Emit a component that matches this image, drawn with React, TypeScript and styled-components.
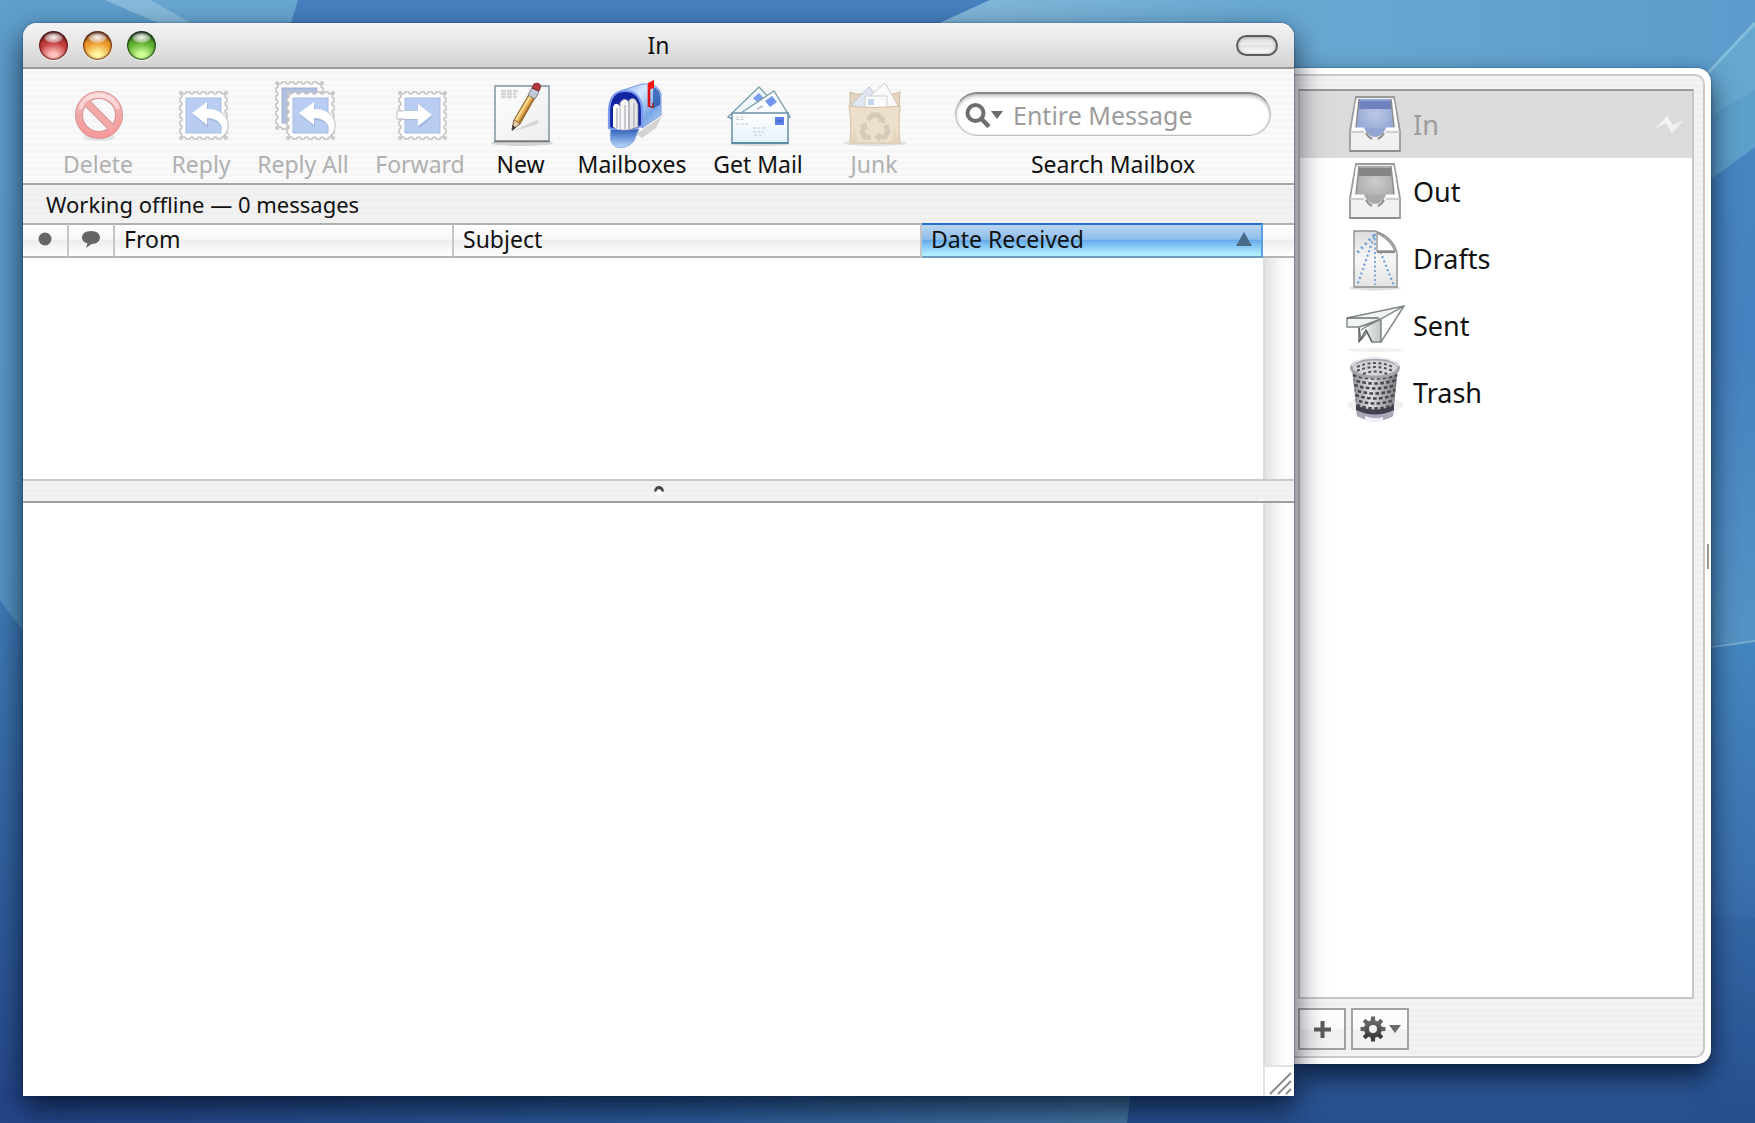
import React from "react";
import styled, { createGlobalStyle, css } from "styled-components";

const fontStack = '"Noto Sans", "Open Sans", "Liberation Sans", sans-serif';
const stripes = (a: string, b: string) =>
  `repeating-linear-gradient(to bottom, ${a} 0px, ${a} 2px, ${b} 4px, ${a} 6px)`;

const GlobalStyle = createGlobalStyle`
  *, *::before, *::after { box-sizing: border-box; }
  body { margin: 0; font-family: ${fontStack}; color: #111; background: #3f7dba; }
  button, input { font: inherit; color: inherit; margin: 0; }
  button { padding: 0; border: 0; background: none; }
  svg { display: block; }
`;

/* ---------- Desktop ---------- */

const Desktop = styled.main`
  position: relative;
  isolation: isolate;
  display: grid;
  grid-template-columns: minmax(0, 1fr) 417px;
  min-height: 100vh;
  padding: 23px 44px 27px 23px;
  overflow: hidden;
`;

const Wallpaper = styled.svg`
  position: absolute;
  inset: 0;
  z-index: -1;
  width: 100%;
  height: 100%;
`;

/* ---------- Main window ---------- */

const Window = styled.section`
  position: relative;
  z-index: 1;
  display: flex;
  flex-direction: column;
  min-width: 0;
  background: #fff;
  border-radius: 14px 14px 0 0;
  box-shadow: 0 0 2px rgba(0, 20, 50, 0.55), 0 12px 30px rgba(0, 10, 25, 0.75);
`;

const TitleBar = styled.header`
  display: grid;
  grid-template-columns: 1fr auto 1fr;
  align-items: center;
  height: 46px;
  padding: 0 16px;
  border-bottom: 2px solid #9b9b9b;
  border-radius: 14px 14px 0 0;
  background: linear-gradient(#f4f4f4, #e6e6e6 45%, #d2d2d2);
`;

const Title = styled.h1`
  margin: 0;
  font-size: 23px;
  font-weight: 400;
  line-height: 30px;
`;

const Lights = styled.div`
  display: flex;
  gap: 15px;
`;

const Light = styled.button<{ $rim: string; $mid: string; $glow: string }>`
  width: 29px;
  height: 29px;
  border-radius: 50%;
  background: radial-gradient(ellipse 10px 6px at 50% 22%, rgba(255, 255, 255, 0.95), rgba(255, 255, 255, 0.45) 80%, transparent),
    radial-gradient(ellipse 16px 13px at 50% 84%, ${(p) => p.$glow} 20%, transparent),
    linear-gradient(${(p) => p.$rim} 5%, ${(p) => p.$mid} 42%, ${(p) => p.$mid});
  box-shadow: inset 0 0 2px 1px ${(p) => p.$rim}, inset 0 2px 2px rgba(20, 20, 20, 0.6),
    0 1px 1px rgba(255, 255, 255, 0.7);
`;

const PillButton = styled.button`
  justify-self: end;
  width: 42px;
  height: 21px;
  border: 2px solid #5d5d5d;
  border-radius: 11px;
  background: linear-gradient(#d8d8d8, #f0f0f0 45%, #e2e2e2 50%, #fff);
  box-shadow: inset 0 0 3px rgba(0, 0, 0, 0.35);
`;

const Toolbar = styled.div`
  display: flex;
  height: 116px;
  padding: 9px 23px 0;
  border-bottom: 2px solid #a6a6a6;
  background: ${stripes("#fafafa", "#f4f4f4")};
`;

const ToolButton = styled.button<{ $width: number }>`
  display: flex;
  flex: none;
  flex-direction: column;
  align-items: center;
  width: ${(p) => p.$width}px;
  font-size: 23px;
  line-height: 28px;
  white-space: nowrap;
  &:disabled { color: #b0b0b0; }
`;

const ToolIcon = styled.svg`
  width: 72px;
  height: 72px;
  overflow: visible;
`;

const SearchGroup = styled.div`
  display: flex;
  flex-direction: column;
  align-items: center;
  width: 316px;
  margin-left: auto;
  font-size: 23px;
  line-height: 28px;
`;

const SearchField = styled.div`
  display: flex;
  align-items: center;
  width: 100%;
  height: 44px;
  margin: 14px 0;
  padding: 0 20px 0 9px;
  border: 1px solid #bdbdbd;
  border-top: 2px solid #8a8a8a;
  border-radius: 22px;
  background: #fff;
  box-shadow: inset 0 3px 3px rgba(0, 0, 0, 0.18), inset 0 0 2px rgba(0, 0, 0, 0.25);
`;

const SearchInput = styled.input`
  flex: 1;
  min-width: 0;
  height: 34px;
  margin-left: 10px;
  padding: 0;
  border: 0;
  outline: 0;
  background: transparent;
  font-size: 25px;
  &::placeholder { color: #9c9c9c; opacity: 1; }
`;

const StatusBar = styled.p`
  height: 38px;
  margin: 0;
  padding: 0 23px;
  font-size: 22px;
  line-height: 38px;
  background: ${stripes("#f2f2f2", "#ededed")};
`;

const MessageList = styled.div`
  display: flex;
  flex-direction: column;
  height: 256px;
`;

const MessageTable = styled.table`
  flex: none;
  width: 100%;
  table-layout: fixed;
  border-collapse: separate;
  border-spacing: 0;
`;

const HeaderCell = styled.th<{ $sorted?: boolean; $last?: boolean }>`
  height: 35px;
  padding: 0;
  border-top: 2px solid #b0b0b0;
  border-right: ${(p) => (p.$last ? "0" : "2px solid #c6c6c6")};
  border-bottom: 2px solid #b4b4b4;
  background: linear-gradient(#fff, #f6f6f6 48%, #ededed 50%, #fff);
  font-weight: 400;
  text-align: left;
  ${(p) =>
    p.$sorted &&
    css`
      border-top-color: #2270cf;
      border-right-color: #5b9fe0;
      border-bottom-color: #6c9cc0;
      background: linear-gradient(#b9d5f1, #8fbeeb 46%, #68aaea 50%, #a6e6ff 88%, #b4f0ff);
    `}
`;

const HeaderButton = styled.button<{ $center?: boolean }>`
  display: flex;
  align-items: center;
  justify-content: ${(p) => (p.$center ? "center" : "space-between")};
  width: 100%;
  height: 31px;
  padding: 0 9px 3px;
  font-size: 23px;
  line-height: 28px;
  white-space: nowrap;
`;

const PaneRow = styled.div`
  display: flex;
  flex: 1;
  min-height: 0;
`;

const Blank = styled.div`
  flex: 1;
`;

const ScrollColumn = styled.div`
  display: flex;
  flex-direction: column;
  width: 31px;
`;

const ScrollTrack = styled.div`
  flex: 1;
  border-left: 2px solid #dcdcdc;
  background: linear-gradient(to right, #e2e2e2, #f6f6f6 45%, #fff 75%, #f6f6f6);
`;

const Splitter = styled.div`
  display: flex;
  justify-content: center;
  height: 24px;
  padding-top: 4px;
  border-top: 2px solid #cacaca;
  border-bottom: 2px solid #9f9f9f;
  background: ${stripes("#f2f2f2", "#ededed")};
`;

const ResizeCorner = styled.div`
  height: 31px;
  border-top: 2px solid #e2e2e2;
  border-left: 2px solid #e2e2e2;
`;

/* ---------- Mailbox drawer ---------- */

const Drawer = styled.aside`
  position: relative;
  display: flex;
  margin: 45px 0 32px;
  padding: 6px 6px 6px 0;
  border-radius: 0 14px 14px 0;
  background: #fff;
  box-shadow: 0 0 2px rgba(0, 20, 50, 0.6), 0 12px 26px rgba(0, 10, 30, 0.75);
`;

const DrawerPanel = styled.div`
  display: flex;
  flex: 1;
  flex-direction: column;
  min-width: 0;
  padding: 13px 9px 6px 4px;
  border: 2px solid #c9c9c9;
  border-left: 0;
  border-radius: 0 10px 10px 0;
  background: ${stripes("#f3f3f3", "#ededed")};
`;

const MailboxList = styled.ul`
  flex: 1;
  margin: 0;
  padding: 0;
  border: 2px solid #c6c6c6;
  border-top-color: #999;
  background: #fff;
  list-style: none;
`;

const MailboxButton = styled.button<{ $selected?: boolean }>`
  display: flex;
  align-items: center;
  gap: 8px;
  width: 100%;
  height: 67px;
  padding: 0 8px 0 45px;
  background: ${(p) => (p.$selected ? "#dbdbdb" : "transparent")};
  color: ${(p) => (p.$selected ? "#9d9d9d" : "#111")};
  font-size: 27px;
  text-align: left;
`;

const MailboxIcon = styled.svg`
  flex: none;
  width: 60px;
  height: 67px;
  overflow: visible;
`;

const MailboxName = styled.span`
  flex: 1;
`;

const DrawerActions = styled.div`
  display: flex;
  gap: 5px;
  margin-top: 9px;
`;

const SquareButton = styled.button<{ $wide?: boolean }>`
  display: flex;
  align-items: center;
  justify-content: center;
  gap: 3px;
  width: ${(p) => (p.$wide ? 58 : 48)}px;
  height: 42px;
  border: 2px solid #a2a2a2;
  background: linear-gradient(#fff, #fafafa 50%, #efefef 52%, #f3f3f3);
`;

const DrawerGrip = styled.div`
  position: absolute;
  top: calc(50% - 22px);
  right: 2px;
  width: 2px;
  height: 25px;
  background: #9a9a9a;
`;

/* ---------- Drawings ---------- */

/* Outline of a postage stamp whose edges are cut by n round notches per side. */
function stampPath(x: number, y: number, size: number, n = 6) {
  const step = size / n;
  const flat = step * 0.5;
  const cut = step - flat;
  const r = cut / 2;
  let d = `M${x} ${y}`;
  const sides = [[1, 0], [0, 1], [-1, 0], [0, -1]];
  for (const [dx, dy] of sides) {
    for (let i = 0; i < n; i++) {
      d += `l${(dx * flat) / 2} ${(dy * flat) / 2}`;
      d += `a${r} ${r} 0 0 0 ${dx * cut} ${dy * cut}`;
      d += `l${(dx * flat) / 2} ${(dy * flat) / 2}`;
    }
  }
  return d + "z";
}

const Stamp = ({ x, y, dim }: { x: number; y: number; dim?: boolean }) => (
  <g>
    <path d={stampPath(x, y, 47)} fill="#fdfdfd" stroke="#c2c2c2" strokeWidth="1.5" strokeLinejoin="round" />
    <rect x={x + 6} y={y + 6} width="35" height="35" fill={dim ? "#b0bfdf" : "#b9cdf2"} stroke={dim ? "#a3b0cf" : "#a9bce4"} strokeWidth="1" />
  </g>
);

const ReplyArrow = ({ x, y }: { x: number; y: number }) => (
  <g transform={`translate(${x} ${y})`}>
    <path d="M13 23L28 12V19C42 18 51 26 48 37Q47 43 43 45C45 34 38 29 28 28V36Z" fill="#8c9cc0" opacity=".4" />
    <path d="M12 21L27 10V17C39 17 48 23 48 33Q48 41 43 44C44 33 38 26 27 26V33Z" fill="#fff" />
    <path d="M41 20C48 25 49 31 48 36Q47 41 43 44" fill="none" stroke="#cfcfcf" strokeWidth="1.2" />
  </g>
);

const icons: Record<string, React.ReactNode> = {
  delete: (
    <>
      <defs>
        <linearGradient id="no" x1="0" y1="0" x2="0" y2="1">
          <stop offset="0" stopColor="#f7c9c8" />
          <stop offset=".5" stopColor="#f0a5a5" />
          <stop offset="1" stopColor="#f69a9c" />
        </linearGradient>
      </defs>
      <ellipse cx="37" cy="59" rx="16" ry="4" fill="#000" opacity=".08" />
      <circle cx="37" cy="37" r="20" fill="none" stroke="#db9393" strokeWidth="8" />
      <path d="M23 23L51 51" stroke="#db9393" strokeWidth="8" />
      <circle cx="37" cy="37" r="20" fill="none" stroke="url(#no)" strokeWidth="6" />
      <path d="M23 23L51 51" stroke="#f2a9a9" strokeWidth="6" />
      <path d="M18 31A20 20 0 0 1 56 31" fill="none" stroke="#fff" strokeWidth="4" opacity=".4" />
    </>
  ),
  reply: (
    <>
      <Stamp x={15} y={14} />
      <ReplyArrow x={15} y={14} />
    </>
  ),
  replyAll: (
    <>
      <Stamp x={9} y={4} dim />
      <Stamp x={20} y={14} />
      <ReplyArrow x={20} y={14} />
    </>
  ),
  forward: (
    <>
      <Stamp x={15} y={14} />
      <path d="M14 34H34V28L49 39L34 51V42H14Z" fill="#8c9cc0" opacity=".4" />
      <path d="M13 33H34V26L48 37L34 48V41H13Z" fill="#fff" />
      <path d="M20 33H13V41H20" fill="none" stroke="#c4c4c4" strokeWidth="1.2" />
    </>
  ),
  compose: (
    <>
      <defs>
        <linearGradient id="paper" x1="0" y1="0" x2="1" y2="1">
          <stop offset="0" stopColor="#fff" />
          <stop offset="1" stopColor="#ececec" />
        </linearGradient>
      </defs>
      <ellipse cx="37" cy="65" rx="31" ry="3" fill="#000" opacity=".14" />
      <rect x="10" y="8" width="54" height="55" fill="url(#paper)" stroke="#8699a4" strokeWidth="1.6" />
      <path d="M9.200 63.500H64.800" stroke="#777" strokeWidth="1.6" />
      <path d="M16 13H33M16 16H31M16 19H32" stroke="#d6d6d6" strokeWidth="2.600" strokeDasharray="5 1" />
      <path d="M28 53L52 42Q56 43 50 47Z" fill="#000" opacity=".13" />
      <path d="M27 52L29 42L46 13L52 16L35 46Z" fill="#e2aa52" stroke="#7e5a2b" strokeWidth="1" />
      <path d="M31 42L48 14" stroke="#f8dc98" strokeWidth="2" />
      <path d="M34 45L51 17" stroke="#a97332" strokeWidth="1.600" />
      <path d="M27 52L29 42L35 46Z" fill="#e6cfae" stroke="#7a5a3a" strokeWidth=".7" />
      <path d="M27 53L27.500 47L31 49.500Z" fill="#3c3c3c" />
      <path d="M43 17L47 10L54 14L50 21Z" fill="#c5cad8" stroke="#6e7385" strokeWidth=".9" />
      <path d="M47 10L49 6Q52 4 55 6.500L55.500 9.500L54 13Z" fill="#b5393a" stroke="#7a2626" strokeWidth=".9" />
    </>
  ),
  mailboxes: (
    <>
      <defs>
        <linearGradient id="mb" x1="0" y1="0" x2="1" y2="1">
          <stop offset="0" stopColor="#7fa6f0" />
          <stop offset=".35" stopColor="#d6e8ff" />
          <stop offset=".7" stopColor="#78a6e6" />
          <stop offset="1" stopColor="#c6daf8" />
        </linearGradient>
        <linearGradient id="door" x1="0" y1="0" x2="0" y2="1">
          <stop offset="0" stopColor="#2757b5" />
          <stop offset="1" stopColor="#b9ddfb" />
        </linearGradient>
      </defs>
      <path d="M40 56L66 38L60 50L46 60Z" fill="#000" opacity=".15" />
      <path d="M24 13L46 6Q62 4 65 16V37L46 50Z" fill="url(#mb)" stroke="#7b9cdf" strokeWidth="1" />
      <path d="M58 9Q64 12 64 19V27Q60 28 57 31V12Z" fill="#1d4fa8" opacity=".7" />
      <path d="M15 50Q12 65 20 69Q30 72 38 63L43 51Z" fill="url(#door)" stroke="#8fb1e6" strokeWidth="1" />
      <path d="M13 50V32Q14 13 29 13Q45 13 46 32V48L36 51H17Z" fill="#10259f" stroke="#7d9af0" strokeWidth="2.200" />
      <path d="M17 49V29Q19 23 24 28V52Z" fill="#fff" />
      <path d="M24 52V25Q28 18 33 24V52Z" fill="#f6f6f6" stroke="#9a9aaa" strokeWidth=".8" />
      <path d="M33 52V22Q39 17 42 27V49Z" fill="#e6e6e9" stroke="#83838f" strokeWidth=".8" />
      <path d="M21 30V50M29 27V51M38 25V50" stroke="#bcbcc2" strokeWidth="1.600" />
      <path d="M53 6V29" stroke="#d80f14" strokeWidth="2.600" />
      <path d="M52 5L58 2V10L52 12Z" fill="#f51414" />
      <path d="M54 29H57V25" fill="none" stroke="#a91515" strokeWidth="1.500" />
    </>
  ),
  getMail: (
    <>
      <defs>
        <linearGradient id="env" x1="0" y1="0" x2="0" y2="1">
          <stop offset="0" stopColor="#fff" />
          <stop offset="1" stopColor="#e3f2fb" />
        </linearGradient>
      </defs>
      <ellipse cx="38" cy="66" rx="30" ry="2" fill="#000" opacity=".12" />
      <path d="M6 39L37 9L50 23L22 47Z" fill="#f1f8fb" stroke="#7fa0af" strokeWidth="1.4" />
      <path d="M31 20L37 15L42 20L36 25Z" fill="#7d9df0" />
      <path d="M16 37L52 13L68 39L45 50Z" fill="#fafdff" stroke="#7fa0af" strokeWidth="1.4" />
      <path d="M43 23L50 18L55 24L48 29Z" fill="#7495ee" />
      <path d="M35 31L41 28" stroke="#bbb" strokeWidth="1.500" />
      <rect x="10" y="35" width="56" height="30" fill="url(#env)" stroke="#6f97ac" strokeWidth="1.6" />
      <path d="M9.500 65H66.500" stroke="#4d82a0" strokeWidth="1.6" />
      <rect x="53" y="39" width="9" height="8" fill="#5c80ea" />
      <path d="M55 43H60" stroke="#3557c4" strokeWidth="1" />
      <path d="M14 39H24M14 41.500H22M14 46H26M31 50H43M31 54H42M32 57H41" stroke="#c4c4c4" strokeWidth="1.200" strokeDasharray="3 1.500" />
    </>
  ),
  junk: (
    <>
      <ellipse cx="37" cy="65" rx="32" ry="3" fill="#000" opacity=".09" />
      <path d="M12 14L18 16H56L62 14L61 30H12Z" fill="#e3d5c1" stroke="#cfbda4" strokeWidth="1" />
      <path d="M14 26L31 9L43 22L38 30H16Z" fill="#dfe5f1" stroke="#bcc6d8" strokeWidth="1" />
      <path d="M33 17L47 5L60 28L50 32Z" fill="#fafafa" stroke="#ccc" strokeWidth="1" />
      <path d="M27 18H49V30H27Z" fill="#fbfbfb" stroke="#cfcfcf" strokeWidth="1" />
      <rect x="30" y="21" width="6" height="6" fill="#c5d6f1" />
      <path d="M11 28Q37 31 62 28Q60 46 62 65H12Q14 46 11 28Z" fill="#ecdfcb" stroke="#d8c4a8" strokeWidth="1.2" />
      <path d="M12 65L17 50L20 65M62 65L56 50L54 65" fill="#e2d0b6" opacity=".6" />
      <g fill="none" stroke="#d6cbba" strokeWidth="5">
        <path d="M30 42L34 37H40L44 42" />
        <path d="M48 47L50 54L47 59H40" />
        <path d="M33 59H27L24 54L26 48" />
      </g>
      <path d="M47 38V46L40 43ZM42 54V64L36 59ZM21 48L28 44L30 52Z" fill="#d6cbba" />
    </>
  ),
};

const Tray = ({ id, dark, mid, light }: { id: string; dark: string; mid: string; light: string }) => (
  <>
    <defs>
      <radialGradient id={id} cx=".5" cy=".45" r=".6">
        <stop offset="0" stopColor={light} />
        <stop offset="1" stopColor={mid} />
      </radialGradient>
    </defs>
    <path d="M11 6H49L55 40V60H5V40Z" fill="#f1f1f1" stroke="#9a9a9a" strokeWidth="1.800" />
    <path d="M14 8H46L49 37H41L38 42H22L19 37H11Z" fill={`url(#${id})`} />
    <path d="M14 8H46V18H14Z" fill={dark} />
    <path d="M14 8H46V10H14Z" fill={mid} />
    <path d="M12 9L8 37M48 9L52 37" stroke="#fff" strokeWidth="2" />
    <path d="M14 8L11 37M46 8L49 37" stroke="#8c8c8c" strokeWidth="1.400" />
    <path d="M7 38H19M41 38H53" stroke="#fff" strokeWidth="3" />
    <path d="M5 41H19M55 41H41" stroke="#c4c4c4" strokeWidth="1.400" />
    <path d="M20 37Q23 46 30 46Q37 46 40 37Z" fill={mid} />
    <path d="M21 42Q23 46 27 48M39 42Q37 46 33 48" stroke="#8c8c8c" strokeWidth="2" fill="none" />
    <path d="M4.500 60H55.500" stroke="#8f8f8f" strokeWidth="1.800" />
  </>
);

const meshRows = [18, 23, 28, 33, 38, 43, 48];

const mailboxIcons: Record<string, React.ReactNode> = {
  In: <Tray id="trayIn" dark="#6f82bd" mid="#93a5d3" light="#bac7e6" />,
  Out: <Tray id="trayOut" dark="#858585" mid="#a9a9a9" light="#cdcdcd" />,
  Drafts: (
    <>
      <defs>
        <linearGradient id="draft" x1="0" y1="0" x2="0" y2="1">
          <stop offset="0" stopColor="#dcdcdc" />
          <stop offset=".5" stopColor="#f6f6f6" />
          <stop offset="1" stopColor="#e4e4e4" />
        </linearGradient>
      </defs>
      <ellipse cx="30" cy="63" rx="26" ry="2.500" fill="#000" opacity=".12" />
      <path d="M9 6H30Q48 12 52 28V62H9Z" fill="url(#draft)" stroke="#8f8f8f" strokeWidth="1.400" />
      <path d="M30 9V60" stroke="#6f9fd6" strokeWidth="1.800" strokeDasharray="2 2.500" />
      <path d="M29 12L12 61M32 18L49 61" stroke="#6f9fd6" strokeWidth="2.200" strokeDasharray="2 2.700" />
      <path d="M29 10L10 30" stroke="#6f9fd6" strokeWidth="3" strokeDasharray="2 3.500" />
      <path d="M32 8Q45 14 50 26H32Z" fill="#fff" stroke="#9b9b9b" strokeWidth="1.400" />
      <path d="M32 27H50" stroke="#8a8a8a" strokeWidth="2" />
    </>
  ),
  Sent: (
    <>
      <defs>
        <linearGradient id="wing" x1="0" y1="0" x2="1" y2="0">
          <stop offset="0" stopColor="#fff" />
          <stop offset="1" stopColor="#bfc5c5" />
        </linearGradient>
      </defs>
      <ellipse cx="30" cy="58" rx="29" ry="2" fill="#000" opacity=".06" />
      <g strokeLinejoin="round" stroke="#7f8787" strokeWidth="1.400">
        <path d="M36 27V50H27L22 40L16 48L14 35Z" fill="url(#wing)" />
        <path d="M2 26L59 14L36 27L14 35H2Z" fill="#f2f4f4" />
        <path d="M59 14L36 27V50Z" fill="#fff" />
        <path d="M2 26H34" fill="none" stroke="#5f6767" />
        <path d="M14 36V50L21 38L27 50" fill="none" stroke="#555c5c" />
        <path d="M16 38L22 34L36 27" fill="none" />
      </g>
    </>
  ),
  Trash: (
    <>
      <defs>
        <linearGradient id="can" x1="0" y1="0" x2="1" y2="0">
          <stop offset="0" stopColor="#8e8e93" />
          <stop offset=".4" stopColor="#e0e0e3" />
          <stop offset="1" stopColor="#77777c" />
        </linearGradient>
      </defs>
      <ellipse cx="30" cy="46" rx="28" ry="8" fill="#000" opacity=".06" />
      <path d="M7 9L12 57Q30 67 48 57L53 9Z" fill="url(#can)" />
      {meshRows.map((y, i) => (
        <path
          key={y}
          d={`M${8 + i * 0.6} ${y - 2}Q30 ${y + 5} ${52 - i * 0.6} ${y - 2}`}
          fill="none"
          stroke="#47474c"
          strokeWidth="2.600"
          strokeDasharray="3.600 2.400"
          strokeDashoffset={i % 2 ? 3 : 0}
        />
      ))}
      <path d="M11 47Q30 56 49 47L48 57Q30 67 12 57Z" fill="#a9a9ba" />
      <path d="M11 46Q30 55 49 46L49 51Q30 60 11 51Z" fill="#40404f" />
      <path d="M20 57Q30 61 38 58V62Q30 64 20 62Z" fill="#f0f0f8" />
      <ellipse cx="30" cy="9" rx="23.500" ry="9" fill="#d6d6db" stroke="#a3a3ae" strokeWidth="3" />
      <path d="M12 8Q30 0 48 8M12 12Q30 4 48 12M18 15Q30 10 42 15" fill="none" stroke="#55555a" strokeWidth="2.200" strokeDasharray="3 2.500" />
      <path d="M7 7Q12 -1 30 -1Q48 -1 53 7" fill="none" stroke="#ededf2" strokeWidth="1.500" />
    </>
  ),
};

const CaretDown = () => (
  <svg width="12" height="8" viewBox="0 0 12 8" aria-hidden="true">
    <path d="M0 0H12L6 8Z" fill="#6b6b6b" />
  </svg>
);

const SearchGlyph = () => (
  <svg width="26" height="26" viewBox="0 0 26 26" aria-hidden="true">
    <circle cx="10.500" cy="11" r="8" fill="none" stroke="#6e6e6e" strokeWidth="4" />
    <path d="M16.500 17L24 24.500" stroke="#6e6e6e" strokeWidth="4.500" />
  </svg>
);

const Gear = () => (
  <svg width="26" height="26" viewBox="-13 -13 26 26" aria-hidden="true">
    <defs>
      <linearGradient id="gear" x1="0" y1="-13" x2="0" y2="13" gradientUnits="userSpaceOnUse">
        <stop offset="0" stopColor="#777" />
        <stop offset="1" stopColor="#303030" />
      </linearGradient>
    </defs>
    <circle r="6.500" fill="none" stroke="url(#gear)" strokeWidth="5" />
    {[0, 45, 90, 135, 180, 225, 270, 315].map((a) => (
      <path key={a} d="M-2.200 -8L-2 -12.500H2L2.200 -8Z" fill={a > 90 && a < 270 ? "#3a3a3a" : "#626262"} transform={`rotate(${a})`} />
    ))}
  </svg>
);

/* ---------- Data ---------- */

const lights = [
  { label: "Close", rim: "#5a1616", mid: "#c23a3a", glow: "#ffc2bd" },
  { label: "Minimize", rim: "#6a2a14", mid: "#eb9a2b", glow: "#fff6a0" },
  { label: "Zoom", rim: "#17361a", mid: "#5fae2c", glow: "#cdff96" },
];

const tools = [
  { icon: "delete", label: "Delete", width: 104, disabled: true },
  { icon: "reply", label: "Reply", width: 102, disabled: true },
  { icon: "replyAll", label: "Reply All", width: 102, disabled: true },
  { icon: "forward", label: "Forward", width: 132, disabled: true },
  { icon: "compose", label: "New", width: 69 },
  { icon: "mailboxes", label: "Mailboxes", width: 154 },
  { icon: "getMail", label: "Get Mail", width: 98 },
  { icon: "junk", label: "Junk", width: 134, disabled: true },
];

const mailboxes = ["In", "Out", "Drafts", "Sent", "Trash"];

export default function App() {
  return (
    <>
      <GlobalStyle />
      <Desktop>
        <Wallpaper viewBox="0 0 1755 1123" preserveAspectRatio="none" aria-hidden="true">
          <defs>
            <linearGradient id="sky" x1="0" y1="0" x2="0" y2="1">
              <stop offset="0" stopColor="#5f9fcd" />
              <stop offset=".5" stopColor="#5796c6" />
              <stop offset="1" stopColor="#4586bd" />
            </linearGradient>
            <linearGradient id="deep" x1="0" y1="540" x2="0" y2="1123" gradientUnits="userSpaceOnUse">
              <stop offset="0" stopColor="#4283bd" />
              <stop offset=".5" stopColor="#3365a2" />
              <stop offset="1" stopColor="#25468a" />
            </linearGradient>
            <linearGradient id="rightSea" x1="0" y1="147" x2="0" y2="645" gradientUnits="userSpaceOnUse">
              <stop offset="0" stopColor="#4785c2" />
              <stop offset=".4" stopColor="#4581c0" />
              <stop offset="1" stopColor="#5493c4" />
            </linearGradient>
            <linearGradient id="rightDeep" x1="0" y1="640" x2="0" y2="1123" gradientUnits="userSpaceOnUse">
              <stop offset="0" stopColor="#4485bf" />
              <stop offset=".5" stopColor="#3a70ad" />
              <stop offset="1" stopColor="#27508f" />
            </linearGradient>
            <linearGradient id="crest" x1="930" y1="0" x2="1755" y2="0" gradientUnits="userSpaceOnUse">
              <stop offset="0" stopColor="#84b9da" />
              <stop offset=".4" stopColor="#69a9d2" />
              <stop offset="1" stopColor="#5c9ccc" />
            </linearGradient>
            <linearGradient id="floor" x1="0" y1="0" x2="1131" y2="0" gradientUnits="userSpaceOnUse">
              <stop offset="0" stopColor="#25468a" />
              <stop offset=".6" stopColor="#2b5c9b" />
              <stop offset="1" stopColor="#4676a4" />
            </linearGradient>
          </defs>
          <rect width="1755" height="1123" fill="url(#sky)" />
          <path d="M105 0L165 26H292L298 0Z" fill="#68a7d1" />
          <path d="M105 0L165 26L240 50L150 0Z" fill="#9cc8e2" opacity=".6" />
          <path d="M298 0L280 60H880L990 0Z" fill="#4680bf" />
          <path d="M990 0L880 50V300H1755V0Z" fill="url(#crest)" />
          <path d="M1755 23L1690 92V200L1755 147Z" fill="#65a7cf" />
          <path d="M1755 23L1690 92" stroke="#84bcdb" strokeWidth="3" />
          <path d="M1755 90L1690 128V200L1755 147Z" fill="#5c9fca" />
          <path d="M1755 147L1600 260V660L1755 641Z" fill="url(#rightSea)" />
          <path d="M1755 641Q1600 652 1100 720V1123H1755Z" fill="url(#rightDeep)" />
          <path d="M1755 641L1690 650" stroke="#76abd0" strokeWidth="2" />
          <path d="M1755 918Q1720 916 1690 908V1123H1755Z" fill="#234c8e" opacity=".18" />
          <path d="M0 600Q12 618 40 650V1123H0Z" fill="url(#deep)" />
          <path d="M0 1090H1131L1127 1123H0Z" fill="url(#floor)" />
        </Wallpaper>

        <Window aria-label="In">
          <TitleBar>
            <Lights>
              {lights.map((l) => (
                <Light key={l.label} aria-label={l.label} $rim={l.rim} $mid={l.mid} $glow={l.glow} />
              ))}
            </Lights>
            <Title>In</Title>
            <PillButton aria-label="Toggle toolbar" />
          </TitleBar>

          <Toolbar>
            {tools.map((t) => (
              <ToolButton key={t.label} $width={t.width} disabled={t.disabled}>
                <ToolIcon viewBox="0 0 72 72" aria-hidden="true">{icons[t.icon]}</ToolIcon>
                {t.label}
              </ToolButton>
            ))}
            <SearchGroup>
              <SearchField>
                <SearchGlyph />
                <CaretDown />
                <SearchInput id="search" type="text" placeholder="Entire Message" />
              </SearchField>
              <label htmlFor="search">Search Mailbox</label>
            </SearchGroup>
          </Toolbar>

          <StatusBar>Working offline — 0 messages</StatusBar>

          <MessageList>
            <MessageTable>
              <colgroup>
                <col style={{ width: 46 }} />
                <col style={{ width: 46 }} />
                <col style={{ width: 339 }} />
                <col />
                <col style={{ width: 341 }} />
                <col style={{ width: 31 }} />
              </colgroup>
              <thead>
                <tr>
                  <HeaderCell scope="col">
                    <HeaderButton $center aria-label="Read status">
                      <svg width="14" height="14" viewBox="0 0 14 14"><circle cx="7" cy="7" r="6.500" fill="#666" /></svg>
                    </HeaderButton>
                  </HeaderCell>
                  <HeaderCell scope="col">
                    <HeaderButton $center aria-label="Chat status">
                      <svg width="20" height="20" viewBox="0 0 20 20">
                        <path d="M10 2C15.500 2 19 4.800 19 8.500S15.500 15 10.500 15L5 19L6.500 14.500C3 13.500 1 11.300 1 8.500C1 4.800 4.500 2 10 2Z" fill="#666" />
                      </svg>
                    </HeaderButton>
                  </HeaderCell>
                  <HeaderCell scope="col"><HeaderButton>From</HeaderButton></HeaderCell>
                  <HeaderCell scope="col"><HeaderButton>Subject</HeaderButton></HeaderCell>
                  <HeaderCell scope="col" $sorted aria-sort="ascending">
                    <HeaderButton>
                      Date Received
                      <svg width="16" height="14" viewBox="0 0 16 14" aria-hidden="true"><path d="M8 0L16 14H0Z" fill="#4a6a8a" /></svg>
                    </HeaderButton>
                  </HeaderCell>
                  <HeaderCell as="td" $last />
                </tr>
              </thead>
            </MessageTable>
            <PaneRow>
              <Blank />
              <ScrollColumn><ScrollTrack /></ScrollColumn>
            </PaneRow>
          </MessageList>

          <Splitter role="separator" aria-orientation="horizontal">
            <svg width="12" height="10" viewBox="0 0 12 10" aria-hidden="true">
              <circle cx="6" cy="6" r="4" fill="#fff" />
              <path d="M1 6Q2 1 6 1Q10 1 11 6L9 7Q8 4 6 4Q4 4 3 7Z" fill="#444" />
            </svg>
          </Splitter>

          <PaneRow>
            <Blank />
            <ScrollColumn>
              <ScrollTrack />
              <ResizeCorner>
                <svg width="27" height="29" viewBox="0 0 27 29" aria-hidden="true">
                  <path d="M5 27L26 6M13 27L26 14M21 27L26 22" stroke="#8c8c8c" strokeWidth="2" />
                </svg>
              </ResizeCorner>
            </ScrollColumn>
          </PaneRow>
        </Window>

        <Drawer aria-label="Mailboxes">
          <DrawerPanel>
            <MailboxList>
              {mailboxes.map((name) => (
                <li key={name}>
                  <MailboxButton $selected={name === "In"}>
                    <MailboxIcon viewBox="0 0 60 67" aria-hidden="true">{mailboxIcons[name]}</MailboxIcon>
                    <MailboxName>{name}</MailboxName>
                    {name === "In" && (
                      <svg width="29" height="20" viewBox="0 0 29 20" aria-hidden="true">
                        <path d="M0 14L12 1L18 10L29 5L17 18L11 8Z" fill="#f3f3f3" />
                      </svg>
                    )}
                  </MailboxButton>
                </li>
              ))}
            </MailboxList>
            <DrawerActions>
              <SquareButton aria-label="Add mailbox">
                <svg width="17" height="17" viewBox="0 0 17 17" aria-hidden="true">
                  <path d="M8.500 0V17M0 8.500H17" stroke="#5a5a5a" strokeWidth="4" />
                </svg>
              </SquareButton>
              <SquareButton $wide aria-label="Mailbox actions">
                <Gear />
                <CaretDown />
              </SquareButton>
            </DrawerActions>
          </DrawerPanel>
          <DrawerGrip />
        </Drawer>
      </Desktop>
    </>
  );
}
